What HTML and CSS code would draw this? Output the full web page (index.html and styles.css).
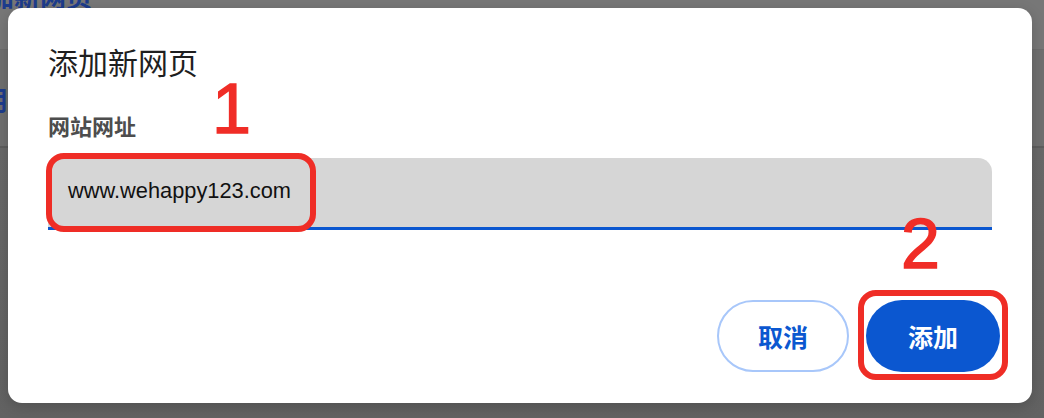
FILE: index.html
```html
<!DOCTYPE html>
<html lang="zh-CN">
<head>
<meta charset="utf-8">
<title>添加新网页</title>
<link rel="stylesheet" href="styles.css">
</head>
<body>
<div class="backdrop">
  <div class="bg-header">
    <div class="bg-title">添加新网页</div>
  </div>
  <div class="bg-band">
    <div class="bg-row">常用</div>
  </div>
  <div class="bg-rest"></div>
</div>

<div class="dialog" role="dialog">
  <h1 class="dialog-title">添加新网页</h1>
  <label class="field-label">网站网址</label>
  <div class="field">www.wehappy123.com</div>
  <div class="footer">
    <button class="btn btn-cancel">取消</button>
    <button class="btn btn-add">添加</button>
  </div>

  <div class="mark mark-box1"></div>
  <div class="mark mark-num1">1</div>
  <div class="mark mark-box2"></div>
  <div class="mark mark-num2">2</div>
</div>
</body>
</html>
```
FILE: styles.css
```css
* { box-sizing: border-box; }

html, body {
  margin: 0;
  padding: 0;
  width: 1044px;
  height: 418px;
  overflow: hidden;
  font-family: "Noto Sans CJK SC", "Noto Sans", sans-serif;
}

/* dimmed page behind the dialog */
.backdrop {
  height: 418px;
  display: flex;
  flex-direction: column;
  background: #666666;
}
.bg-header {
  height: 50px;
  background: #777777;
  border-bottom: 1px solid #6c6c6c;
  overflow: hidden;
}
.bg-title {
  margin-top: -17px;
  margin-left: -38px;
  font-size: 26px;
  line-height: 26px;
  font-weight: 700;
  color: #1d3c8c;
}
.bg-band {
  height: 98px;
  background: #6f6f6f;
  border-bottom: 2px solid #5d5d5d;
  overflow: hidden;
  display: flex;
  align-items: center;
}
.bg-row {
  margin-left: -44px;
  margin-top: 2px;
  font-size: 26px;
  line-height: 26px;
  font-weight: 700;
  color: #1d3c8c;
}
.bg-rest {
  flex: 1;
  background: linear-gradient(to bottom, #686868, #626262);
}

/* dialog */
.dialog {
  position: absolute;
  left: 8px;
  top: 8px;
  width: 1024px;
  height: 395px;
  background: #ffffff;
  border-radius: 14px;
  padding: 33px 40px 31px 40px;
  display: flex;
  flex-direction: column;
  box-shadow: 0 4px 14px rgba(0, 0, 0, 0.18);
}
.dialog-title {
  margin: 0;
  font-size: 30px;
  line-height: 40px;
  font-weight: 400;
  color: #1f1f1f;
}
.field-label {
  margin-top: 30px;
  font-size: 22px;
  line-height: 28px;
  font-weight: 700;
  color: #4d4d4d;
}
.field {
  margin-top: 19px;
  height: 72px;
  background: #d6d6d6;
  border-radius: 14px 14px 0 0;
  border-bottom: 3px solid #0b57d0;
  padding: 0 0 4px 20px;
  font-family: "Liberation Sans", Arial, sans-serif;
  font-size: 21.8px;
  line-height: 65px;
  color: #111111;
}
.footer {
  margin-top: 70px;
  margin-right: -8px;
  display: flex;
  justify-content: flex-end;
  gap: 17px;
}
.btn {
  height: 72px;
  border-radius: 36px;
  font-family: "Noto Sans CJK SC", sans-serif;
  font-size: 25px;
  font-weight: 700;
  padding: 0;
  cursor: pointer;
}
.btn-cancel {
  width: 132px;
  background: #ffffff;
  border: 2px solid #a8c7fa;
  color: #0b57d0;
}
.btn-add {
  width: 134px;
  background: #0b57d0;
  border: none;
  color: #ffffff;
}

/* red annotations drawn over the screenshot */
.mark {
  position: absolute;
  pointer-events: none;
}
.mark-box1 {
  left: 38px;
  top: 145px;
  width: 270px;
  height: 79px;
  border: 6px solid #ef2d26;
  border-radius: 18px;
}
.mark-box2 {
  left: 850px;
  top: 282px;
  width: 150px;
  height: 90px;
  border: 6px solid #ef2d26;
  border-radius: 18px;
}
.mark-num1, .mark-num2 {
  font-family: "Liberation Sans", Arial, sans-serif;
  font-size: 70px;
  line-height: 70px;
  color: #f02d27;
  -webkit-text-stroke: 1.5px #f02d27;
}
.mark-num1 {
  left: 204px;
  top: 66px;
}
.mark-num2 {
  left: 893px;
  top: 201px;
}
```
